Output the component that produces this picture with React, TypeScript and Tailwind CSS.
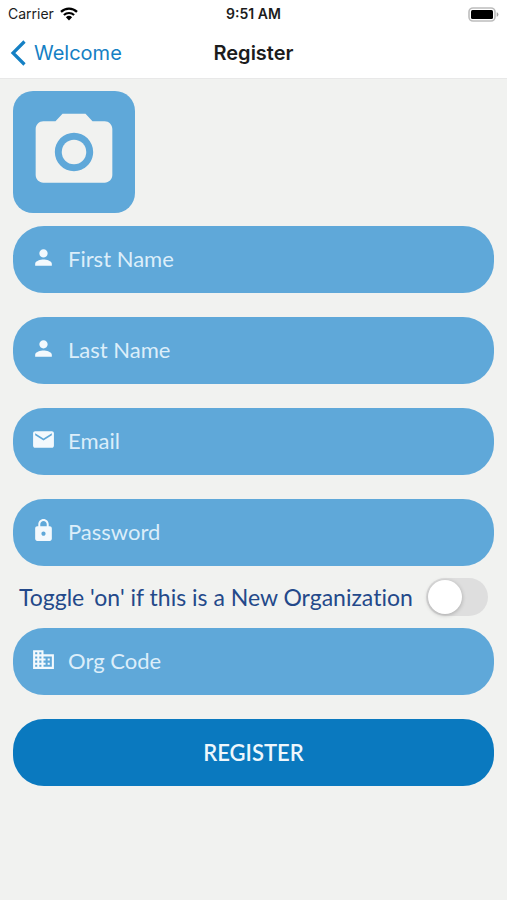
import { useState } from 'react';
import type { ComponentType } from 'react';
import { MdBusiness, MdCameraAlt, MdEmail, MdLock, MdPerson } from 'react-icons/md';

function StatusBar() {
  return (
    <div className="grid h-7 grid-cols-3 items-center px-2 text-sm leading-7 text-[#1c1c1c]">
      <div className="flex items-center gap-1.5">
        <span>Carrier</span>
        <svg viewBox="0 0 18 14" className="h-3.5 w-[18px]" fill="none" aria-hidden="true">
          <path d="M1 4.9a11.6 11.6 0 0 1 16 0" stroke="#000" strokeWidth="2.3" />
          <path d="M3.9 8a7.5 7.5 0 0 1 10.2 0" stroke="#000" strokeWidth="2.2" />
          <path d="M9 13.4 5.9 10.3a4.5 4.5 0 0 1 6.2 0z" fill="#000" />
        </svg>
      </div>
      <span className="text-center font-semibold">9:51 AM</span>
      <svg viewBox="0 0 31 15" className="h-[15px] w-[31px] justify-self-end" aria-hidden="true">
        <rect x="1" y="1" width="26" height="13" rx="4" fill="#fff" stroke="#bdbdbd" strokeWidth="1.6" />
        <rect x="3" y="3" width="22" height="9" rx="1.5" fill="#000" />
        <path d="M28.7 5.2a2.4 2.4 0 0 1 0 4.6z" fill="#a5a5a5" />
      </svg>
    </div>
  );
}

function NavBar() {
  return (
    <div className="grid h-[50px] grid-cols-[1fr_auto_1fr] items-center px-2.5 text-xl">
      <a href="#welcome" className="flex items-center gap-2 text-[#1580c4]">
        <svg viewBox="0 0 16 26" className="h-[26px] w-4" fill="none" aria-hidden="true">
          <path d="M14.5 1.5 3 13l11.5 11.5" stroke="currentColor" strokeWidth="3.2" />
        </svg>
        Welcome
      </a>
      <h1 className="font-semibold text-[#1c1c1c]">Register</h1>
    </div>
  );
}

type FieldProps = {
  id: string;
  label: string;
  type?: string;
  icon: ComponentType<{ className?: string }>;
};

function Field({ id, label, type = 'text', icon: Icon }: FieldProps) {
  return (
    <div className="flex h-[67px] items-center gap-3 rounded-[31px] bg-[#5fa8d9] pr-6 pl-[18px]">
      <label htmlFor={id} aria-label={label} className="pb-1 text-[#f3f9fd]">
        <Icon className="size-[25px]" />
      </label>
      <input
        id={id}
        type={type}
        placeholder={label}
        className="h-full min-w-0 flex-1 bg-transparent pb-0.5 text-[22px] text-white outline-none placeholder:text-[#dceefa]"
      />
    </div>
  );
}

export default function App() {
  const [isNew, setIsNew] = useState(false);
  return (
    <div className="min-h-screen bg-[#f1f2f0] font-['Lato',sans-serif]">
      <header className="border-b border-[#e8e8e8] bg-white font-['Inter',sans-serif]">
        <StatusBar />
        <NavBar />
      </header>
      <form className="px-[13px] pt-3" onSubmit={(e) => e.preventDefault()}>
        <button
          type="button"
          aria-label="Add photo"
          className="mb-[13px] flex size-[122px] items-center justify-center rounded-[20px] bg-[#5fa8d9] text-[#f1f2f0]"
        >
          <MdCameraAlt className="size-[92px]" />
        </button>
        <div className="flex flex-col gap-6">
          <Field id="first" label="First Name" icon={MdPerson} />
          <Field id="last" label="Last Name" icon={MdPerson} />
          <Field id="email" label="Email" type="email" icon={MdEmail} />
          <Field id="password" label="Password" type="password" icon={MdLock} />
        </div>
        <label className="flex h-[62px] items-center justify-between px-1.5 text-[23px] text-[#24498a] [font-variant-ligatures:none]">
          Toggle 'on' if this is a New Organization
          <input
            type="checkbox"
            role="switch"
            checked={isNew}
            onChange={(e) => setIsNew(e.target.checked)}
            className="h-[38px] w-[62px] shrink-0 appearance-none rounded-full bg-[#dedede] p-0.5 before:block before:size-[34px] before:rounded-full before:bg-white before:shadow-[0_1px_4px_rgba(0,0,0,0.25)] checked:bg-[#0a79bf] checked:before:translate-x-6"
          />
        </label>
        <div className="flex flex-col gap-6">
          <Field id="org" label="Org Code" icon={MdBusiness} />
          <button
            type="submit"
            className="h-[67px] rounded-[31px] bg-[#0a79bf] text-[22px] font-semibold text-[#eef7fc]"
          >
            REGISTER
          </button>
        </div>
      </form>
    </div>
  );
}
